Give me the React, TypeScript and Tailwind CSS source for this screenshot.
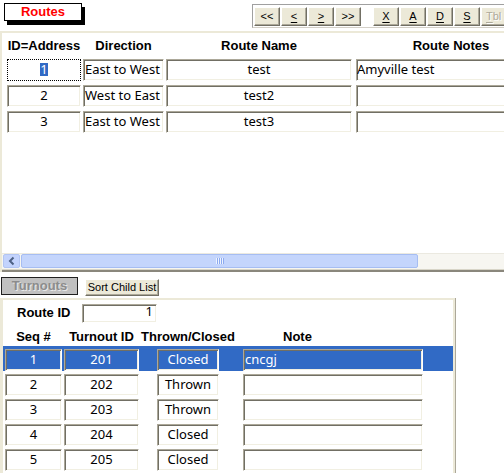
import React from 'react';

const sunken =
  'border border-t-[#aca899] border-l-[#aca899] border-b-white border-r-white shadow-[inset_1px_1px_0_#716f64,inset_-1px_-1px_0_#f1efe2]';
const raised =
  'border border-t-white border-l-white border-b-[#716f64] border-r-[#716f64] shadow-[inset_-1px_-1px_0_#aca899]';
const head = "font-['Liberation_Sans',Arial,sans-serif] font-bold text-[13px] leading-[15px] whitespace-nowrap";
const small = "font-['Liberation_Sans',Arial,sans-serif] text-[11px]";

const ROUTES = [
  { id: '1', dir: 'East to West', name: 'test', notes: 'Amyville test' },
  { id: '2', dir: 'West to East', name: 'test2', notes: '' },
  { id: '3', dir: 'East to West', name: 'test3', notes: '' },
];

const TURNOUTS = [
  { seq: '1', id: '201', state: 'Closed', note: 'cncgj' },
  { seq: '2', id: '202', state: 'Thrown', note: '' },
  { seq: '3', id: '203', state: 'Thrown', note: '' },
  { seq: '4', id: '204', state: 'Closed', note: '' },
  { seq: '5', id: '205', state: 'Closed', note: '' },
];

const NAV = [
  { label: '<<', u: false },
  { label: '<', u: true },
  { label: '>', u: true },
  { label: '>>', u: false },
];
const EDIT = ['X', 'A', 'D', 'S'];

function ToolButton({ label, underline }: { label: string; underline: boolean }) {
  return (
    <div className={`w-[26px] h-[19px] shrink-0 bg-[#ece9d8] ${raised} flex items-center justify-center ${small}`}>
      <span className={underline ? 'underline underline-offset-[2px]' : ''}>{label}</span>
    </div>
  );
}

function Cell({ w, ml = 0, children, align = 'center', selected = false }: any) {
  return (
    <div
      className={`h-[22px] shrink-0 overflow-hidden whitespace-nowrap leading-[18px] ${sunken} ${
        align === 'center' ? 'text-center' : 'text-left'
      } ${selected ? 'bg-[#316ac5] text-white' : 'bg-white'}`}
      style={{ width: w, marginLeft: ml }}
    >
      {children}
    </div>
  );
}

export default function App() {
  return (
    <div className="w-[504px] h-[473px] overflow-hidden bg-white flex flex-col font-['Noto_Sans',sans-serif] text-[13px] text-black">
      {/* title strip */}
      <div className="h-[31px] shrink-0 flex items-start">
        <div className="ml-[4px] mt-[3px] w-[78px] h-[18px] shrink-0 bg-white border border-black shadow-[3px_4px_0_#000] text-center">
          <span className={`${head} text-[#ff0000] leading-[14px] block`}>Routes</span>
        </div>
        <div className="ml-[170px] mt-[4px] h-[24px] w-[260px] shrink-0 border border-[#a0a0a0] border-b-[#d4d0c8] bg-white flex items-start pl-[1px] pt-[2px] gap-[1px]">
          {NAV.map(b => (
            <ToolButton key={b.label} label={b.label} underline={b.u} />
          ))}
          <div className="w-[10px] shrink-0" />
          {EDIT.map(l => (
            <ToolButton key={l} label={l} underline />
          ))}
          <div className={`w-[40px] h-[19px] shrink-0 bg-[#ece9d8] ${raised} flex items-center pl-[4px] ${small} text-[#aca899] [text-shadow:1px_1px_0_#fff]`}>
            <span>
              <span className="underline underline-offset-[2px]">T</span>bl
            </span>
          </div>
        </div>
      </div>

      {/* routes panel */}
      <div className="h-[241px] shrink-0 border-t-2 border-l-2 border-[#ece9d8] flex flex-col">
        <div className={`h-[26px] shrink-0 flex pl-[5px] pt-[5px] ${head}`}>
          <div className="w-[74px] shrink-0 flex justify-center">ID=Address</div>
          <div className="w-[81px] ml-[2px] shrink-0 flex justify-center">Direction</div>
          <div className="w-[186px] ml-[2px] shrink-0 flex justify-center">Route Name</div>
          <div className="w-[190px] ml-[4px] shrink-0 flex justify-center">Route Notes</div>
        </div>
        <div className="flex flex-col gap-[4px] shrink-0">
          {ROUTES.map((r, i) => (
            <div key={r.id} className="flex pl-[5px]">
              {i === 0 ? (
                <div className="w-[74px] h-[22px] shrink-0 border border-dotted border-black bg-white text-center leading-[18px]">
                  <span className="inline-block h-[13px] leading-[13px] bg-[#316ac5] text-white px-[0px]">1</span>
                </div>
              ) : (
                <Cell w={74}>{r.id}</Cell>
              )}
              <Cell w={81} ml={2} align="left">
                <span className="pl-[1px]">{r.dir}</span>
              </Cell>
              <Cell w={186} ml={2}>{r.name}</Cell>
              <Cell w={190} ml={4} align="left">{r.notes}</Cell>
            </div>
          ))}
        </div>
        <div className="flex-1" />
        {/* horizontal scrollbar */}
        <div className="h-[16px] shrink-0 bg-[#f7f6f1] border-t border-[#ebe9e0] flex items-stretch pl-[1px] pb-[1px]">
          <div className="w-[17px] shrink-0 rounded-[2px] bg-[#c3d3fd] border border-[#b2c5f3] flex items-center justify-center">
            <svg width="8" height="10" viewBox="0 0 8 10">
              <path d="M5.5 1.5 L2 5 L5.5 8.5" fill="none" stroke="#4d6185" strokeWidth="2" />
            </svg>
          </div>
          <div className="w-[397px] ml-[1px] shrink-0 rounded-[2px] bg-[#c4d5fc] border border-[#a6bdf2] flex items-center justify-center">
            <div className="flex gap-[1px]">
              {[0, 1, 2, 3].map(k => (
                <div key={k} className="w-[1px] h-[6px] bg-[#eef3fe] shadow-[1px_0_0_#8caaf0]" />
              ))}
            </div>
          </div>
        </div>
        <div className="h-[1px] shrink-0 bg-[#d8d5c8]" />
        <div className="h-[2px] shrink-0 bg-[#8a877c]" />
      </div>

      {/* child header buttons */}
      <div className="h-[26px] shrink-0 flex items-start">
        <div className="ml-[1px] mt-[5px] w-[77px] h-[18px] shrink-0 bg-[#c0c0c0] border border-[#202020] text-center">
          <span className={`${head} block leading-[16px] text-[#8c8c8c] [text-shadow:1px_1px_0_#e8e8e8]`}>Turnouts</span>
        </div>
        <div className={`ml-[7px] mt-[7px] w-[74px] h-[17px] shrink-0 bg-[#ece9d8] ${raised} flex items-center justify-center ${small} whitespace-nowrap`}>
          Sort Child List
        </div>
      </div>

      {/* turnouts panel */}
      <div className="w-[456px] flex-1 border-r border-[#aca899]">
        <div className="h-full border-t-2 border-l-[3px] border-r-2 border-[#ece9d8] flex flex-col">
          <div className="flex items-start shrink-0">
            <div className={`ml-[14px] mt-[5px] w-[65px] shrink-0 ${head}`}>Route ID</div>
            <div className={`mt-[4px] w-[75px] h-[19px] shrink-0 bg-white ${sunken} text-right pr-[3px] leading-[12px]`}>1</div>
          </div>
          <div className={`mt-[6px] flex shrink-0 pl-[2px] ${head}`}>
            <div className="w-[57px] shrink-0 flex justify-center">Seq #</div>
            <div className="w-[75px] ml-[2px] shrink-0 flex justify-center">Turnout ID</div>
            <div className="w-[62px] ml-[18px] shrink-0 flex justify-center">Thrown/Closed</div>
            <div className="ml-[64px] shrink-0">Note</div>
          </div>
          <div className="mt-[2px] flex flex-col shrink-0">
            {TURNOUTS.map((t, i) => {
              const sel = i === 0;
              return (
                <div key={t.seq} className={`h-[25px] shrink-0 flex items-start pt-[3px] pl-[2px] ${sel ? 'bg-[#316ac5]' : ''}`}>
                  <Cell w={57} selected={sel}>{t.seq}</Cell>
                  <Cell w={75} ml={2} selected={sel}>{t.id}</Cell>
                  <Cell w={62} ml={18} selected={sel}>{t.state}</Cell>
                  <Cell w={180} ml={24} align="left" selected={sel}>
                    <span className="pl-[1px]">{t.note}</span>
                  </Cell>
                </div>
              );
            })}
          </div>
        </div>
      </div>
    </div>
  );
}
